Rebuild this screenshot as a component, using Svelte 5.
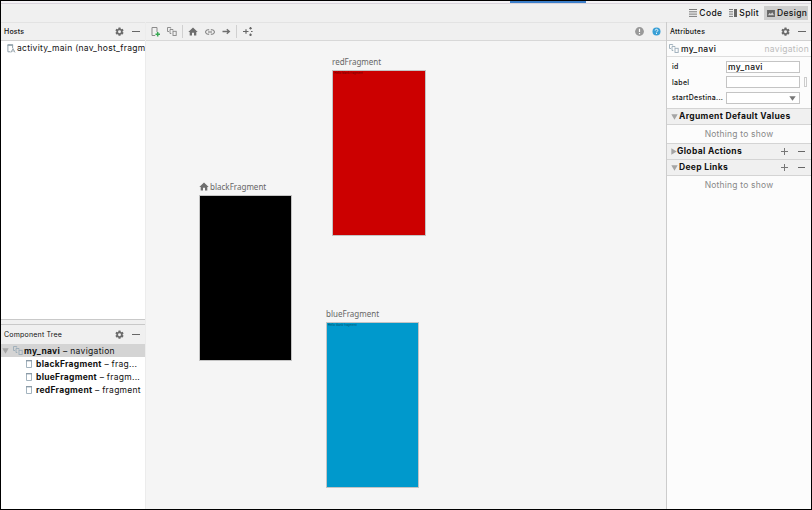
<script>
  const tree = [
    { name: 'blackFragment', type: 'frag...' },
    { name: 'blueFragment', type: 'fragm...' },
    { name: 'redFragment', type: 'fragment' },
  ];
  const fragments = [
    { name: 'redFragment', tone: 'red', x: 187, y: 15, home: false, hint: true },
    { name: 'blackFragment', tone: 'black', x: 54, y: 140, home: true, hint: false },
    { name: 'blueFragment', tone: 'blue', x: 181, y: 267, home: false, hint: true },
  ];
</script>

{#snippet gear()}
  <svg class="gear" width="9" height="9" viewBox="0 0 16 16"><path fill="#6b6b6b" fill-rule="evenodd" d="M6.300 1h3.400l.5 2.200 1.200.7 2.200-.7 1.700 3-1.700 1.500v1.200l1.700 1.500-1.700 3-2.200-.7-1.200.7-.5 2.200H6.300l-.5-2.200-1.200-.7-2.200.7-1.700-3 1.700-1.500V7.700L.7 6.200l1.700-3 2.200.7 1.200-.7zM8 5.700a2.600 2.600 0 1 0 0 5.200 2.600 2.600 0 0 0 0-5.200z"/></svg>
{/snippet}

{#snippet graph(color)}
  <svg class="graph" width="10" height="9" viewBox="0 0 10 9" fill="none" stroke={color} stroke-width=".9"><path d="M2 4.500H.5V.5h3.200v1M4.300 6.500H3V2.500h3v1"/><rect x="6" y="4.300" width="3.200" height="4.200"/></svg>
{/snippet}

{#snippet home()}
  <svg class="home" width="10" height="9" viewBox="0 0 10 9"><path fill="#6e6e6e" d="M5 .5 9.700 4.900H8.300v3.600H6V5.800H4v2.700H1.700V4.900H.3z"/></svg>
{/snippet}

{#snippet tools()}
  <span class="tools">{@render gear()}<i class="minus"></i></span>
{/snippet}

<div class="window">
  <div class="tabs"><i></i></div>
  <div class="modes">
    <span class="mode code"><svg width="8" height="8" viewBox="0 0 8 8"><path stroke="#7a7a7a" d="M0 .5h8M0 2.800h8M0 5.100h8M0 7.400h8"/></svg>Code</span>
    <span class="mode split"><svg width="8" height="8" viewBox="0 0 8 8"><path stroke="#777" d="M0 .5h4M0 2.800h4M0 5.100h4M0 7.400h4"/><path fill="#666" d="M5 0h3v8H5z"/></svg>Split</span>
    <span class="mode design"><svg width="8" height="7" viewBox="0 0 9 8"><path fill="#666" d="M0 0h9v8H0z"/><path fill="#cfcfcf" d="m1 6 2-3 1.300 1.700L6 2.700 8 6z"/></svg>Design</span>
  </div>

  <div class="body">
    <aside class="left">
      <header><span class="hosts">Hosts</span>{@render tools()}</header>
      <div class="hostlist">
        <div class="host">
          <svg width="9" height="9" viewBox="0 0 9 9" fill="none"><path stroke="#91a0aa" d="M3.500 7.800H.9V1h4.700v3"/><path stroke="#91a0aa" stroke-width="1.500" d="M.5 1h5.600"/><path stroke="#9aa7b0" stroke-width=".9" d="m4 8.500 2-4 2 4M4.700 7h2.600"/></svg>
          <span>activity_main (nav_host_fragm</span>
        </div>
      </div>
      <div class="splitter"></div>
      <header class="treehead"><span>Component Tree</span>{@render tools()}</header>
      <div class="tree">
        <div class="root">
          <svg class="tri" width="7" height="6" viewBox="0 0 7 6"><path fill="#a5a5a5" d="M.3.3h6.400L3.500 5.700z"/></svg>
          {@render graph('#9aabb8')}
          <span><b>my_navi</b> – navigation</span>
        </div>
        {#each tree as item}
          <div class="leaf">
            <svg width="6" height="8" viewBox="0 0 6 8" fill="none"><path stroke="#9aabb8" stroke-width=".9" d="M.5.5h5v7h-5z"/><path stroke="#8999a5" stroke-width="1.300" d="M0 .7h6"/></svg>
            <span><b>{item.name}</b> – {item.type}</span>
          </div>
        {/each}
      </div>
    </aside>

    <main>
      <div class="toolbar">
        <svg class="add" width="10" height="10" viewBox="0 0 10 10" fill="none"><path stroke="#8b8b8b" d="M4.200 8.500H1v-8h5v4.500"/><path stroke="#36a852" stroke-width="1.500" d="M6.700 5v4.500M4.500 7.300H9"/></svg>
        {@render graph('#858585')}
        <i class="sep one"></i>
        {@render home()}
        <svg class="link" width="10" height="6" viewBox="0 0 10 6" fill="none" stroke="#737373"><path d="M4.200.8H2.800a2.200 2.200 0 0 0 0 4.400h1.400M5.800.8h1.400a2.200 2.200 0 0 1 0 4.400H5.800M3 3h4"/></svg>
        <svg class="arrow" width="9" height="7" viewBox="0 0 9 7" fill="none" stroke="#6e6e6e" stroke-width="1.300"><path d="M.5 3.500h7M4.800 1.200l2.600 2.300-2.600 2.300"/></svg>
        <i class="sep two"></i>
        <svg class="arrange" width="10" height="9" viewBox="0 0 10 9" fill="none" stroke="#666" stroke-width="1.200"><path d="M0 4.500h5.500M3 2.200v4.600M7.500 0v2.500M6.300 1.300h2.500M7.500 6.500V9M6.300 7.800h2.500M8 4.500h1.600"/></svg>
        <span class="status">
          <svg width="9" height="9" viewBox="0 0 9 9"><circle cx="4.500" cy="4.500" r="4.400" fill="#999"/><path stroke="#fff" stroke-width="1.200" d="M4.500 1.800v3.200M4.500 6v1.200"/></svg>
          <svg width="9" height="9" viewBox="0 0 9 9"><circle cx="4.500" cy="4.500" r="4" fill="#389fd6"/><path fill="none" stroke="#fff" stroke-width=".9" d="M3.200 3.500c0-1.700 2.600-1.600 2.600 0 0 1-1.300.9-1.300 1.900M4.500 6v1"/></svg>
        </span>
      </div>
      <div class="canvas">
        {#each fragments as f}
          <div class="fragment" style="left:{f.x}px;top:{f.y}px">
            <div class="title">{#if f.home}{@render home()}{/if}<span>{f.name}</span></div>
            <div class="screen {f.tone}">{#if f.hint}<span>Hello blank fragment</span>{/if}</div>
          </div>
        {/each}
      </div>
    </main>

    <aside class="right">
      <header><span class="attrs">Attributes</span>{@render tools()}</header>
      <div class="identity">{@render graph('#9aabb8')}<span class="navi">my_navi</span><span class="kind">navigation</span></div>
      <div class="form">
        <div class="field"><span class="label">id</span><div class="input">my_navi</div></div>
        <div class="field"><span class="label">label</span><div class="input"></div><i class="pick"></i></div>
        <div class="field"><span class="label start">startDestina...</span><div class="input"><svg width="7" height="5" viewBox="0 0 7 5"><path fill="#777" d="M.3.200h6.400L3.500 4.800z"/></svg></div></div>
      </div>
      <div class="section"><svg class="tri" width="7" height="6" viewBox="0 0 7 6"><path fill="#a5a5a5" d="M.3.3h6.400L3.500 5.700z"/></svg><b class="arg">Argument Default Values</b></div>
      <div class="empty">Nothing to show</div>
      <div class="section global"><svg class="tri" width="6" height="7" viewBox="0 0 6 7"><path fill="#a5a5a5" d="M.3.3v6.400L5.700 3.500z"/></svg><b>Global Actions</b><span class="pm"><i class="plus"></i><i class="minus"></i></span></div>
      <div class="section deep"><svg class="tri" width="7" height="6" viewBox="0 0 7 6"><path fill="#a5a5a5" d="M.3.3h6.400L3.500 5.700z"/></svg><b>Deep Links</b><span class="pm"><i class="plus"></i><i class="minus"></i></span></div>
      <div class="empty last">Nothing to show</div>
    </aside>
  </div>
</div>

<style>
  .window, .window * { box-sizing: border-box; }
  .window { width: 812px; height: 510px; border: 1px solid #000; background: #f0f0f0; display: flex; flex-direction: column; font: 8.500px/13px Inter, sans-serif; letter-spacing: .28px; color: #111; overflow: hidden; white-space: nowrap; }
  svg { display: block; flex: none; }
  i { display: block; flex: none; }
  .tabs { height: 3px; background: #f4f2f5; border-bottom: 1px solid #d9d4dc; flex: none; }
  .tabs i { margin-left: 509px; width: 76px; height: 2px; background: #3c7fca; }
  .modes { height: 18px; flex: none; display: flex; justify-content: flex-end; align-items: center; padding: 0 3px 0 0; }
  .mode { display: flex; align-items: center; gap: 2px; height: 14px; font-weight: 500; letter-spacing: .35px; }
  .code { margin-right: 7px; }
  .split { margin-right: 5px; gap: 2px; }
  .design { background: #cecece; padding: 0 2px 0 3px; width: 44px; gap: 2px; }
  .body { flex: 1; display: flex; min-height: 0; }
  .left { width: 144px; display: flex; flex-direction: column; background: #fff; }
  header { height: 19px; flex: none; background: #f0f0f0; border-top: 1px solid #e3e3e3; border-bottom: 1px solid #d1d1d1; display: flex; align-items: center; padding: 0 5px 0 3px; font-size: 7px; font-weight: 500; letter-spacing: .25px; }
  .tools { margin-left: auto; display: flex; align-items: center; gap: 8px; }
  .minus { width: 8px; height: 1px; background: #666; }
  .hosts { letter-spacing: .2px; }
  .hostlist { height: 278px; flex: none; }
  .host { display: flex; align-items: center; gap: 1px; height: 15px; padding-left: 6px; }
  .host span { letter-spacing: .28px; line-height: 15px; }
  .splitter { height: 6px; background: #f0f0f0; border-top: 1px solid #c9c9c9; border-bottom: 1px solid #c9c9c9; flex: none; }
  .treehead { height: 19px; border: 0; font-weight: 400; }
  .treehead > span:first-child { letter-spacing: .2px; }
  .tree { flex: 1; }
  .root { height: 13px; background: #d4d4d4; display: flex; align-items: center; padding-left: 1px; }
  .root .graph { margin-left: 4px; margin-right: 1px; }
  .root span { letter-spacing: .33px; }
  .root span, .leaf span { padding-top: 2px; line-height: 13px; }
  .leaf { height: 13px; display: flex; align-items: center; padding-left: 25px; gap: 4px; letter-spacing: .27px; }
  main { width: 521px; display: flex; flex-direction: column; background: #f5f5f5; border-left: 1px solid #ececec; }
  .toolbar { height: 19px; flex: none; background: #f0f0f0; border-top: 1px solid #e3e3e3; border-bottom: 1px solid #d8d8d8; display: flex; align-items: center; padding: 0 5px 0 5px; }
  .toolbar .graph { margin-left: 6px; }
  .sep { width: 1px; height: 13px; background: #d0d0d0; }
  .one { margin: 0 5px; }
  .two { margin: 0 6px 0 5px; }
  .link { margin: 0 7px; }
  .status { display: flex; gap: 8px; margin-left: auto; }
  .canvas { position: relative; flex: 1; margin-left: -1px; }
  .fragment { position: absolute; width: 94px; }
  .title { height: 14px; display: flex; align-items: flex-start; gap: 1px; color: #666; font: 8px/11px "Noto Sans", sans-serif; letter-spacing: .01px; }
  .title .home { margin-top: 1px; }
  .screen { width: 94px; height: 166px; border: 1px solid #c4c4c4; border-right-width: 1.500px; overflow: hidden; }
  .screen.black { width: 93px; }
  .screen.blue { width: 93px; }
  .screen span { display: block; font: 3.100px/5px Roboto, sans-serif; letter-spacing: 0; color: #0008; padding-left: 1px; }
  .red { background: #c00; }
  .black { background: #000; }
  .blue { background: #0099cc; }
  .right { width: 145px; background: #fcfcfc; border-left: 1px solid #ccc; }
  .identity { height: 16px; display: flex; align-items: center; border-bottom: 1px solid #ddd; padding: 0 2px; line-height: 15px; }
  .identity span { padding-top: 1px; }
  .navi { margin-left: 2px; font-weight: 500; letter-spacing: .35px; }
  .kind { margin-left: auto; color: #bbb; letter-spacing: .3px; }
  .form { height: 51px; padding-top: 3px; display: flex; flex-direction: column; gap: 2px; }
  .field { display: flex; height: 13.500px; align-items: center; padding-left: 5px; }
  .label { width: 54px; font-size: 7px; font-weight: 500; letter-spacing: .28px; }
  .input { width: 74px; height: 12px; border: 1px solid #c4c4c4; background: #fff; line-height: 11px; padding-left: 1px; font-weight: 500; letter-spacing: .3px; }
  .input svg { margin: 3px 3px 0 auto; }
  .pick { width: 3px; height: 10px; border: 1px solid #ccc; margin-left: 4px; }
  .section { height: 17px; background: #f0f0f0; border-top: 1px solid #d4d4d4; border-bottom: 1px solid #d4d4d4; display: flex; align-items: center; padding: 0 6px 0 4px; gap: 1px; letter-spacing: .33px; }
  .global { height: 16px; border-bottom: 0; }
  .global b { margin-left: -1px; }
  .deep { height: 17px; }
  .pm { margin-left: auto; display: flex; align-items: center; gap: 10px; }
  .pm .minus { width: 7px; }
  .plus { width: 7px; height: 7px; background: linear-gradient(#777, #777) 50% 50% / 7px 1px no-repeat, linear-gradient(#777, #777) 50% 50% / 1px 7px no-repeat; }
  .empty { height: 18px; display: flex; align-items: center; justify-content: center; color: #888; letter-spacing: .2px; }
</style>
